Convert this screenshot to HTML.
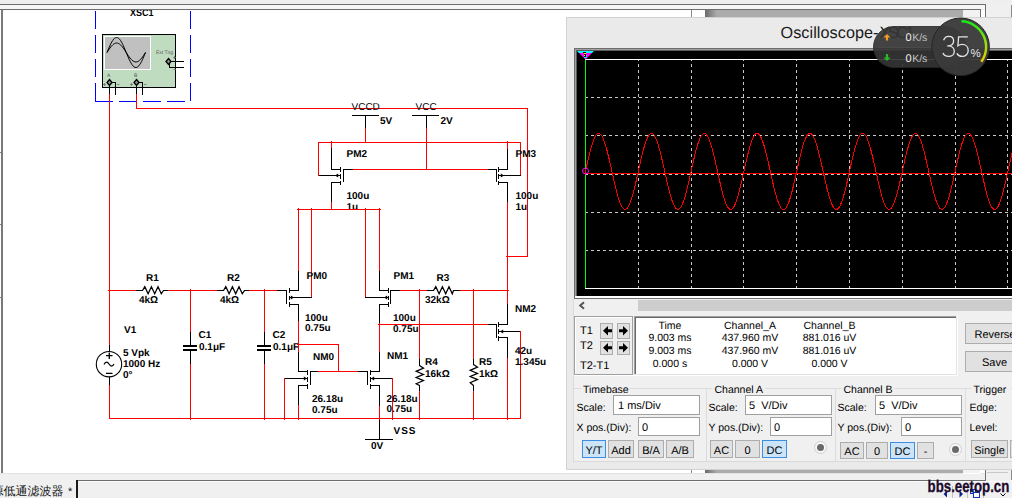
<!DOCTYPE html>
<html><head><meta charset="utf-8"><title>Multisim</title>
<style>
html,body{margin:0;padding:0;width:1012px;height:498px;overflow:hidden;background:#ffffff;}
svg{display:block;}
text{font-family:"Liberation Sans",sans-serif;text-rendering:geometricPrecision;}
</style></head><body>
<svg width="1012" height="498" viewBox="0 0 1012 498" shape-rendering="auto">
<rect x="0" y="0" width="1012" height="10" fill="#efefef" />
<rect x="0" y="4" width="985" height="1" fill="#6e6e6e" />
<rect x="0" y="5" width="985" height="4" fill="#f6f6f6" />
<rect x="0" y="9" width="980" height="1" fill="#6e6e6e" />
<rect x="0" y="10" width="1012" height="463" fill="#ffffff" />
<rect x="1" y="10" width="2" height="463" fill="#7a7a7a" />
<rect x="0" y="152" width="1" height="1" fill="#7a7a7a" />
<rect x="0" y="224" width="1" height="1" fill="#7a7a7a" />
<rect x="0" y="297" width="1" height="1" fill="#7a7a7a" />
<rect x="0" y="473" width="1012" height="1" fill="#e3e3e3" />
<rect x="0" y="474" width="1012" height="24" fill="#f0f0f0" />
<rect x="76" y="480" width="910" height="1" fill="#6e6e6e" />
<rect x="76" y="480" width="2" height="18" fill="#1a1a1a" />
<rect x="78" y="481" width="934" height="1" fill="#fafafa" />
<text x="-8.5" y="495" font-size="12" fill="#101010">源低通滤波器</text><text x="68" y="495" font-size="11" fill="#101010">*</text>
<rect x="691" y="10" width="1" height="7" fill="#8a8a8a" />
<defs><linearGradient id="sg" x1="0" x2="1"><stop offset="0" stop-color="#6a6a6a"/><stop offset="1" stop-color="#ababab"/></linearGradient></defs>
<rect x="705" y="10" width="12" height="7" fill="url(#sg)" />
<rect x="717" y="10" width="246" height="7" fill="#ababab" />
<rect x="963" y="10" width="17" height="7" fill="#f2f2f2" />
<rect x="980" y="9" width="1" height="8" fill="#6e6e6e" />
<rect x="985" y="4" width="1" height="13" fill="#6e6e6e" />
<rect x="986" y="5" width="25" height="12" fill="#f0f0f0" />
<rect x="1011" y="5" width="1" height="12" fill="#8a8a8a" />
<path d="M95.5 11V102M95 101.5H191M190.5 11V102" fill="none" stroke="#0000ff" stroke-width="1" stroke-dasharray="18 6"/>
<text x="130" y="16" font-size="10" font-weight="bold" fill="#000" textLength="23.5" lengthAdjust="spacingAndGlyphs">XSC1</text>
<rect x="102" y="34" width="74" height="54" fill="#000" />
<rect x="103" y="35" width="72" height="52" fill="#c0dcc0" />
<rect x="104" y="36" width="47" height="34" fill="#ffffff" />
<rect x="105" y="37" width="45" height="32" fill="#c0c0c0" />
<polyline fill="none" stroke="#000" stroke-width="1" points="107.0,52.5 108.0,50.2 108.9,47.9 109.9,45.7 110.8,43.7 111.8,41.9 112.8,40.4 113.7,39.1 114.7,38.2 115.7,37.7 116.6,37.5 117.6,37.7 118.5,38.2 119.5,39.1 120.5,40.4 121.4,41.9 122.4,43.7 123.4,45.7 124.3,47.9 125.3,50.2 126.2,52.5 127.2,54.8 128.2,57.1 129.1,59.3 130.1,61.3 131.1,63.1 132.0,64.6 133.0,65.9 133.9,66.8 134.9,67.3 135.9,67.5 136.8,67.3 137.8,66.8 138.8,65.9 139.7,64.6 140.7,63.1 141.7,61.3 142.6,59.3 143.6,57.1 144.5,54.8 145.5,52.5"/>
<polyline fill="none" stroke="#000" stroke-width="1" points="107.0,52.5 108.0,51.0 108.9,49.6 109.9,48.2 110.8,46.9 111.8,45.8 112.8,44.8 113.7,44.0 114.7,43.5 115.7,43.1 116.6,43.0 117.6,43.1 118.5,43.5 119.5,44.0 120.5,44.8 121.4,45.8 122.4,46.9 123.4,48.2 124.3,49.6 125.3,51.0 126.2,52.5 127.2,54.0 128.2,55.4 129.1,56.8 130.1,58.1 131.1,59.2 132.0,60.2 133.0,61.0 133.9,61.5 134.9,61.9 135.9,62.0 136.8,61.9 137.8,61.5 138.8,61.0 139.7,60.2 140.7,59.2 141.7,58.1 142.6,56.8 143.6,55.4 144.5,54.0 145.5,52.5"/>
<text x="107" y="77.2" font-size="5" font-weight="normal" fill="#505050" >A</text>
<text x="134" y="77.2" font-size="5" font-weight="normal" fill="#505050" >B</text>
<path d="M103 84.5h3M104.5 83v3M117 84.5h2.5M130 84.5h3M131.5 83v3M144 84.5h2.5M173 57.5h3M174.5 56v3M173.5 69.5h2.5" stroke="#707070" stroke-width="0.8"/>
<text x="156" y="54" font-size="5" font-weight="normal" fill="#606060" >Ext Trig</text>
<path d="M109.5 79.5L112 82.5L109.5 85.5L107 82.5Z" fill="#909090" stroke="#000" stroke-width="1.3"/>
<path d="M136.5 79.5L139 82.5L136.5 85.5L134 82.5Z" fill="#909090" stroke="#000" stroke-width="1.3"/>
<path d="M168.5 58.5L171 61.5L168.5 64.5L166 61.5Z" fill="#909090" stroke="#000" stroke-width="1.3"/>
<rect x="109" y="85" width="1" height="9" fill="#000000" />
<rect x="112" y="82" width="4" height="1" fill="#000000" />
<rect x="115" y="82" width="1" height="13" fill="#000000" />
<rect x="136" y="85" width="1" height="9" fill="#000000" />
<rect x="139" y="82" width="4" height="1" fill="#000000" />
<rect x="142" y="82" width="1" height="13" fill="#000000" />
<rect x="171" y="61" width="13" height="1" fill="#000000" />
<rect x="169" y="63" width="1" height="5" fill="#000000" />
<rect x="169" y="67" width="15" height="1" fill="#000000" />
<rect x="109" y="94" width="1" height="251" fill="#ff0000" />
<rect x="109" y="345" width="1" height="7" fill="#000000" />
<rect x="136" y="94" width="1" height="15" fill="#ff0000" />
<rect x="136" y="108" width="392" height="1" fill="#ff0000" />
<rect x="527" y="108" width="1" height="149" fill="#ff0000" />
<rect x="507" y="256" width="21" height="1" fill="#ff0000" />
<text x="351.5" y="109.5" font-size="10" font-weight="normal" fill="#000" >VCCD</text>
<text x="415.5" y="109.5" font-size="10" font-weight="normal" fill="#000" >VCC</text>
<rect x="352" y="115" width="27" height="1" fill="#000000" />
<rect x="365" y="115" width="1" height="13" fill="#000000" />
<rect x="365" y="128" width="1" height="15" fill="#ff0000" />
<rect x="412" y="115" width="27" height="1" fill="#000000" />
<rect x="426" y="115" width="1" height="13" fill="#000000" />
<rect x="426" y="128" width="1" height="42" fill="#ff0000" />
<text x="380" y="124" font-size="10" font-weight="bold" fill="#000" >5V</text>
<text x="440.5" y="124" font-size="10" font-weight="bold" fill="#000" >2V</text>
<rect x="318" y="142" width="203" height="1" fill="#ff0000" />
<rect x="318" y="142" width="1" height="34" fill="#ff0000" />
<rect x="319" y="175" width="22" height="1" fill="#000000" />
<path d="M335 175.5L338.2 173.4V177.6Z" fill="#000"/>
<rect x="331" y="142" width="1" height="6" fill="#ff0000" />
<rect x="331" y="148" width="1" height="22" fill="#000000" />
<rect x="340" y="167" width="1" height="5" fill="#000000" />
<rect x="340" y="174" width="1" height="5" fill="#000000" />
<rect x="340" y="181" width="1" height="4" fill="#000000" />
<rect x="343" y="169" width="1" height="13" fill="#000000" />
<rect x="331" y="169" width="10" height="1" fill="#000000" />
<rect x="331" y="182" width="10" height="1" fill="#000000" />
<rect x="343" y="169" width="10" height="1" fill="#000000" />
<rect x="353" y="169" width="135" height="1" fill="#ff0000" />
<rect x="488" y="169" width="9" height="1" fill="#000000" />
<rect x="331" y="182" width="1" height="20" fill="#000000" />
<rect x="331" y="202" width="1" height="8" fill="#ff0000" />
<text x="346.5" y="157" font-size="10" font-weight="bold" fill="#000" >PM2</text>
<text x="346.5" y="199" font-size="10" font-weight="bold" fill="#000" >100u</text>
<text x="346.5" y="210" font-size="10" font-weight="bold" fill="#000" >1u</text>
<rect x="520" y="142" width="1" height="34" fill="#ff0000" />
<rect x="498" y="175" width="23" height="1" fill="#000000" />
<path d="M504 175.5L500.8 173.4V177.6Z" fill="#000"/>
<rect x="507" y="142" width="1" height="7" fill="#ff0000" />
<rect x="507" y="149" width="1" height="21" fill="#000000" />
<rect x="498" y="167" width="1" height="5" fill="#000000" />
<rect x="498" y="174" width="1" height="5" fill="#000000" />
<rect x="498" y="181" width="1" height="4" fill="#000000" />
<rect x="496" y="169" width="1" height="13" fill="#000000" />
<rect x="498" y="169" width="10" height="1" fill="#000000" />
<rect x="498" y="182" width="10" height="1" fill="#000000" />
<rect x="507" y="182" width="1" height="20" fill="#000000" />
<rect x="507" y="202" width="1" height="102" fill="#ff0000" />
<rect x="507" y="304" width="1" height="21" fill="#000000" />
<text x="515.5" y="157" font-size="10" font-weight="bold" fill="#000" >PM3</text>
<text x="515.5" y="199" font-size="10" font-weight="bold" fill="#000" >100u</text>
<text x="515.5" y="210" font-size="10" font-weight="bold" fill="#000" >1u</text>
<rect x="298" y="209" width="82" height="1" fill="#ff0000" />
<rect x="298" y="209" width="1" height="62" fill="#ff0000" />
<rect x="298" y="271" width="1" height="20" fill="#000000" />
<rect x="311" y="209" width="1" height="89" fill="#ff0000" />
<rect x="289" y="297" width="23" height="1" fill="#000000" />
<path d="M294 297.5L290.8 295.4V299.6Z" fill="#000"/>
<rect x="289" y="288" width="1" height="5" fill="#000000" />
<rect x="289" y="296" width="1" height="4" fill="#000000" />
<rect x="289" y="302" width="1" height="5" fill="#000000" />
<rect x="286" y="290" width="1" height="14" fill="#000000" />
<rect x="289" y="290" width="10" height="1" fill="#000000" />
<rect x="289" y="304" width="10" height="1" fill="#000000" />
<rect x="264" y="290" width="13" height="1" fill="#ff0000" />
<rect x="277" y="290" width="10" height="1" fill="#000000" />
<rect x="298" y="304" width="1" height="17" fill="#000000" />
<rect x="298" y="321" width="1" height="24" fill="#ff0000" />
<text x="306.5" y="278.5" font-size="10" font-weight="bold" fill="#000" >PM0</text>
<text x="305" y="320.5" font-size="10" font-weight="bold" fill="#000" >100u</text>
<text x="305" y="331" font-size="10" font-weight="bold" fill="#000" >0.75u</text>
<rect x="379" y="209" width="1" height="62" fill="#ff0000" />
<rect x="379" y="271" width="1" height="20" fill="#000000" />
<rect x="365" y="209" width="1" height="89" fill="#ff0000" />
<rect x="365" y="297" width="24" height="1" fill="#000000" />
<path d="M384 297.5L387.2 295.4V299.6Z" fill="#000"/>
<rect x="388" y="288" width="1" height="5" fill="#000000" />
<rect x="388" y="296" width="1" height="4" fill="#000000" />
<rect x="388" y="302" width="1" height="5" fill="#000000" />
<rect x="390" y="290" width="1" height="14" fill="#000000" />
<rect x="379" y="290" width="10" height="1" fill="#000000" />
<rect x="379" y="304" width="10" height="1" fill="#000000" />
<rect x="390" y="290" width="10" height="1" fill="#000000" />
<rect x="400" y="290" width="28" height="1" fill="#ff0000" />
<rect x="427" y="290" width="7" height="1" fill="#000000" />
<polyline fill="none" stroke="#000" stroke-width="1.25" points="433.5,290.5 435.8,286.7 439.1,293.8 442.4,286.7 445.7,293.8 449.0,286.7 452.3,293.8 453.5,290.5"/>
<rect x="453" y="290" width="8" height="1" fill="#000000" />
<rect x="460" y="290" width="48" height="1" fill="#ff0000" />
<rect x="379" y="304" width="1" height="20" fill="#000000" />
<rect x="379" y="324" width="1" height="28" fill="#ff0000" />
<rect x="379" y="352" width="1" height="20" fill="#000000" />
<rect x="379" y="324" width="109" height="1" fill="#ff0000" />
<rect x="488" y="324" width="9" height="1" fill="#000000" />
<text x="393.5" y="278.5" font-size="10" font-weight="bold" fill="#000" >PM1</text>
<text x="393" y="320.5" font-size="10" font-weight="bold" fill="#000" >100u</text>
<text x="393" y="331.5" font-size="10" font-weight="bold" fill="#000" >0.75u</text>
<text x="436.5" y="281" font-size="10" font-weight="bold" fill="#000" >R3</text>
<text x="425" y="303" font-size="10" font-weight="bold" fill="#000" >32kΩ</text>
<rect x="419" y="290" width="1" height="69" fill="#ff0000" />
<rect x="419" y="359" width="1" height="7" fill="#000000" />
<polyline fill="none" stroke="#000" stroke-width="1.25" points="419.5,365.5 423.5,368.2 416.2,371.3 423.5,374.4 416.2,377.5 423.5,380.6 416.2,383.7 419.5,385.5"/>
<rect x="419" y="385" width="1" height="7" fill="#000000" />
<rect x="419" y="391" width="1" height="28" fill="#ff0000" />
<text x="425" y="364.5" font-size="10" font-weight="bold" fill="#000" >R4</text>
<text x="425" y="376.5" font-size="10" font-weight="bold" fill="#000" >16kΩ</text>
<rect x="473" y="290" width="1" height="69" fill="#ff0000" />
<rect x="473" y="359" width="1" height="6" fill="#000000" />
<polyline fill="none" stroke="#000" stroke-width="1.25" points="473.5,364.5 477.5,367.2 470.2,370.3 477.5,373.4 470.2,376.5 477.5,379.6 470.2,382.7 473.5,385.5"/>
<rect x="473" y="385" width="1" height="7" fill="#000000" />
<rect x="473" y="391" width="1" height="28" fill="#ff0000" />
<text x="479" y="364.5" font-size="10" font-weight="bold" fill="#000" >R5</text>
<text x="479" y="376.5" font-size="10" font-weight="bold" fill="#000" >1kΩ</text>
<rect x="498" y="322" width="1" height="5" fill="#000000" />
<rect x="498" y="329" width="1" height="5" fill="#000000" />
<rect x="498" y="336" width="1" height="5" fill="#000000" />
<rect x="496" y="324" width="1" height="14" fill="#000000" />
<rect x="498" y="324" width="10" height="1" fill="#000000" />
<rect x="498" y="337" width="10" height="1" fill="#000000" />
<rect x="498" y="331" width="23" height="1" fill="#000000" />
<path d="M500 331.5L503.2 329.4V333.6Z" fill="#000"/>
<rect x="520" y="331" width="1" height="88" fill="#ff0000" />
<rect x="507" y="337" width="1" height="21" fill="#000000" />
<rect x="507" y="358" width="1" height="61" fill="#ff0000" />
<text x="515" y="312" font-size="10" font-weight="bold" fill="#000" >NM2</text>
<text x="515" y="353.5" font-size="10" font-weight="bold" fill="#000" >42u</text>
<text x="515" y="365" font-size="10" font-weight="bold" fill="#000" >1.345u</text>
<rect x="109" y="290" width="28" height="1" fill="#ff0000" />
<rect x="136" y="290" width="7" height="1" fill="#000000" />
<polyline fill="none" stroke="#000" stroke-width="1.25" points="142.5,290.5 144.8,286.7 148.1,293.8 151.4,286.7 154.7,293.8 158.0,286.7 161.3,293.8 163.5,290.5"/>
<rect x="163" y="290" width="6" height="1" fill="#000000" />
<rect x="168" y="290" width="50" height="1" fill="#ff0000" />
<rect x="217" y="290" width="7" height="1" fill="#000000" />
<polyline fill="none" stroke="#000" stroke-width="1.25" points="223.5,290.5 225.8,286.7 229.1,293.8 232.4,286.7 235.7,293.8 239.0,286.7 242.3,293.8 244.5,290.5"/>
<rect x="244" y="290" width="6" height="1" fill="#000000" />
<rect x="249" y="290" width="16" height="1" fill="#ff0000" />
<text x="146" y="281" font-size="10" font-weight="bold" fill="#000" >R1</text>
<text x="139" y="303" font-size="10" font-weight="bold" fill="#000" >4kΩ</text>
<text x="227" y="281" font-size="10" font-weight="bold" fill="#000" >R2</text>
<text x="220" y="303" font-size="10" font-weight="bold" fill="#000" >4kΩ</text>
<rect x="190" y="290" width="1" height="42" fill="#ff0000" />
<rect x="190" y="332" width="1" height="14" fill="#000000" />
<rect x="183" y="345" width="14" height="2" fill="#000000" />
<rect x="183" y="349" width="14" height="2" fill="#000000" />
<rect x="190" y="350" width="1" height="14" fill="#000000" />
<rect x="190" y="364" width="1" height="55" fill="#ff0000" />
<text x="198.5" y="338" font-size="10" font-weight="bold" fill="#000" >C1</text>
<text x="199" y="350" font-size="10" font-weight="bold" fill="#000" >0.1μF</text>
<rect x="264" y="290" width="1" height="42" fill="#ff0000" />
<rect x="264" y="332" width="1" height="14" fill="#000000" />
<rect x="257" y="345" width="14" height="2" fill="#000000" />
<rect x="257" y="349" width="14" height="2" fill="#000000" />
<rect x="264" y="350" width="1" height="14" fill="#000000" />
<rect x="264" y="364" width="1" height="55" fill="#ff0000" />
<text x="272.5" y="338" font-size="10" font-weight="bold" fill="#000" >C2</text>
<text x="273" y="350" font-size="10" font-weight="bold" fill="#000" >0.1μF</text>
<text x="124" y="332.5" font-size="10" font-weight="bold" fill="#000" >V1</text>
<circle cx="109" cy="364.2" r="12.7" fill="none" stroke="#000" stroke-width="1.1"/>
<path d="M106 355.7h6.5M109.3 352.5v6.5M106 373.3h6.5" stroke="#000" stroke-width="1.3"/>
<path d="M104 364.5C105.5 361.5 107.5 361.5 109 364S112.5 367 114 364" fill="none" stroke="#000" stroke-width="1.2"/>
<rect x="109" y="377" width="1" height="8" fill="#000000" />
<rect x="109" y="385" width="1" height="34" fill="#ff0000" />
<text x="123" y="356" font-size="10" font-weight="bold" fill="#000" >5 Vpk</text>
<text x="123" y="367" font-size="10" font-weight="bold" fill="#000" >1000 Hz</text>
<text x="123" y="378" font-size="10" font-weight="bold" fill="#000" >0°</text>
<rect x="109" y="418" width="412" height="1" fill="#ff0000" />
<rect x="298" y="344" width="41" height="1" fill="#ff0000" />
<rect x="338" y="344" width="1" height="27" fill="#ff0000" />
<rect x="298" y="345" width="1" height="7" fill="#ff0000" />
<rect x="298" y="352" width="1" height="20" fill="#000000" />
<rect x="307" y="370" width="1" height="5" fill="#000000" />
<rect x="307" y="377" width="1" height="5" fill="#000000" />
<rect x="307" y="384" width="1" height="5" fill="#000000" />
<rect x="310" y="371" width="1" height="14" fill="#000000" />
<rect x="298" y="371" width="10" height="1" fill="#000000" />
<rect x="298" y="385" width="10" height="1" fill="#000000" />
<rect x="284" y="378" width="24" height="1" fill="#000000" />
<path d="M307 378.5L303.8 376.4V380.6Z" fill="#000"/>
<rect x="284" y="378" width="1" height="41" fill="#ff0000" />
<rect x="310" y="371" width="8" height="1" fill="#000000" />
<rect x="318" y="371" width="40" height="1" fill="#ff0000" />
<rect x="358" y="371" width="10" height="1" fill="#000000" />
<rect x="298" y="385" width="1" height="20" fill="#000000" />
<rect x="298" y="405" width="1" height="14" fill="#ff0000" />
<text x="313" y="359.5" font-size="10" font-weight="bold" fill="#000" >NM0</text>
<text x="312" y="401.5" font-size="10" font-weight="bold" fill="#000" >26.18u</text>
<text x="312" y="412.5" font-size="10" font-weight="bold" fill="#000" >0.75u</text>
<rect x="370" y="370" width="1" height="5" fill="#000000" />
<rect x="370" y="377" width="1" height="5" fill="#000000" />
<rect x="370" y="384" width="1" height="5" fill="#000000" />
<rect x="367" y="371" width="1" height="14" fill="#000000" />
<rect x="370" y="371" width="10" height="1" fill="#000000" />
<rect x="370" y="385" width="10" height="1" fill="#000000" />
<rect x="370" y="378" width="23" height="1" fill="#000000" />
<path d="M371 378.5L374.2 376.4V380.6Z" fill="#000"/>
<rect x="392" y="378" width="1" height="41" fill="#ff0000" />
<rect x="379" y="385" width="1" height="21" fill="#000000" />
<rect x="379" y="406" width="1" height="13" fill="#ff0000" />
<text x="387" y="359" font-size="10" font-weight="bold" fill="#000" >NM1</text>
<text x="386.5" y="401.5" font-size="10" font-weight="bold" fill="#000" >26.18u</text>
<text x="386.5" y="412" font-size="10" font-weight="bold" fill="#000" >0.75u</text>
<rect x="379" y="419" width="1" height="21" fill="#000000" />
<rect x="365" y="439" width="28" height="1" fill="#000000" />
<text x="393.5" y="434" font-size="10" font-weight="bold" fill="#000" letter-spacing="1">VSS</text>
<text x="371" y="449" font-size="10" font-weight="bold" fill="#000" >0V</text>
<path d="M364 143h3v-1h-1v-1h-1v1h-1z" fill="#ff0000"/>
<path d="M330 143h3v-1h-1v-1h-1v1h-1z" fill="#ff0000"/>
<path d="M506 143h3v-1h-1v-1h-1v1h-1z" fill="#ff0000"/>
<path d="M425 170h3v-1h-1v-1h-1v1h-1z" fill="#ff0000"/>
<path d="M330 210h3v-1h-1v-1h-1v1h-1z" fill="#ff0000"/>
<path d="M297 210h3v-1h-1v-1h-1v1h-1z" fill="#ff0000"/>
<path d="M310 210h3v-1h-1v-1h-1v1h-1z" fill="#ff0000"/>
<path d="M364 210h3v-1h-1v-1h-1v1h-1z" fill="#ff0000"/>
<path d="M378 210h3v-1h-1v-1h-1v1h-1z" fill="#ff0000"/>
<path d="M108 291h3v-1h-1v-1h-1v1h-1z" fill="#ff0000"/>
<path d="M189 291h3v-1h-1v-1h-1v1h-1z" fill="#ff0000"/>
<path d="M263 291h3v-1h-1v-1h-1v1h-1z" fill="#ff0000"/>
<path d="M418 291h3v-1h-1v-1h-1v1h-1z" fill="#ff0000"/>
<path d="M472 291h3v-1h-1v-1h-1v1h-1z" fill="#ff0000"/>
<path d="M506 291h3v-1h-1v-1h-1v1h-1z" fill="#ff0000"/>
<path d="M506 257h3v-1h-1v-1h-1v1h-1z" fill="#ff0000"/>
<path d="M378 325h3v-1h-1v-1h-1v1h-1z" fill="#ff0000"/>
<path d="M297 345h3v-1h-1v-1h-1v1h-1z" fill="#ff0000"/>
<path d="M337 372h3v-1h-1v-1h-1v1h-1z" fill="#ff0000"/>
<path d="M189 418h3v1h-1v1h-1v-1h-1z" fill="#ff0000"/>
<path d="M263 418h3v1h-1v1h-1v-1h-1z" fill="#ff0000"/>
<path d="M283 418h3v1h-1v1h-1v-1h-1z" fill="#ff0000"/>
<path d="M297 418h3v1h-1v1h-1v-1h-1z" fill="#ff0000"/>
<path d="M378 418h3v1h-1v1h-1v-1h-1z" fill="#ff0000"/>
<path d="M391 418h3v1h-1v1h-1v-1h-1z" fill="#ff0000"/>
<path d="M418 418h3v1h-1v1h-1v-1h-1z" fill="#ff0000"/>
<path d="M472 418h3v1h-1v1h-1v-1h-1z" fill="#ff0000"/>
<path d="M506 418h3v1h-1v1h-1v-1h-1z" fill="#ff0000"/>
<rect x="0" y="0" width="566" height="4" fill="#efefef" />
<rect x="0" y="4" width="566" height="1" fill="#6e6e6e" />
<rect x="0" y="5" width="566" height="4" fill="#f6f6f6" />
<rect x="0" y="9" width="566" height="1" fill="#6e6e6e" />
<rect x="566" y="17" width="446" height="453" fill="#d2d2d2" />
<rect x="567" y="18" width="445" height="451" fill="#eaeaea" />
<text x="780.5" y="38" font-size="16.2" fill="#1a1a1a" textLength="98" lengthAdjust="spacing">Oscilloscope-</text><text x="879.5" y="38" font-size="16.2" fill="#1a1a1a" textLength="35" lengthAdjust="spacing">XSC1</text>
<rect x="574" y="48" width="438" height="251" fill="#6e6e6e" />
<rect x="575" y="49" width="437" height="249" fill="#a0a0a0" />
<rect x="576" y="50" width="436" height="247" fill="#5a5a5a" />
<rect x="577" y="51" width="435" height="245" fill="#000000" />
<rect x="575" y="296" width="437" height="2" fill="#ffffff" />
<line x1="585" y1="97.5" x2="1012" y2="97.5" stroke="#c8c8c8" stroke-width="1" stroke-dasharray="3 3"/>
<line x1="585" y1="135.5" x2="1012" y2="135.5" stroke="#c8c8c8" stroke-width="1" stroke-dasharray="3 3"/>
<line x1="585" y1="174.5" x2="1012" y2="174.5" stroke="#c8c8c8" stroke-width="1" stroke-dasharray="3 3"/>
<line x1="585" y1="212.5" x2="1012" y2="212.5" stroke="#c8c8c8" stroke-width="1" stroke-dasharray="3 3"/>
<line x1="585" y1="250.5" x2="1012" y2="250.5" stroke="#c8c8c8" stroke-width="1" stroke-dasharray="3 3"/>
<line x1="638.5" y1="64" x2="638.5" y2="288" stroke="#c8c8c8" stroke-width="1" stroke-dasharray="3 3"/>
<rect x="638" y="60" width="1" height="1" fill="#c8c8c8" />
<line x1="691.5" y1="64" x2="691.5" y2="288" stroke="#c8c8c8" stroke-width="1" stroke-dasharray="3 3"/>
<rect x="691" y="60" width="1" height="1" fill="#c8c8c8" />
<line x1="743.5" y1="64" x2="743.5" y2="288" stroke="#c8c8c8" stroke-width="1" stroke-dasharray="3 3"/>
<rect x="743" y="60" width="1" height="1" fill="#c8c8c8" />
<line x1="796.5" y1="64" x2="796.5" y2="288" stroke="#c8c8c8" stroke-width="1" stroke-dasharray="3 3"/>
<rect x="796" y="60" width="1" height="1" fill="#c8c8c8" />
<line x1="849.5" y1="64" x2="849.5" y2="288" stroke="#c8c8c8" stroke-width="1" stroke-dasharray="3 3"/>
<rect x="849" y="60" width="1" height="1" fill="#c8c8c8" />
<line x1="902.5" y1="64" x2="902.5" y2="288" stroke="#c8c8c8" stroke-width="1" stroke-dasharray="3 3"/>
<rect x="902" y="60" width="1" height="1" fill="#c8c8c8" />
<line x1="955.5" y1="64" x2="955.5" y2="288" stroke="#c8c8c8" stroke-width="1" stroke-dasharray="3 3"/>
<rect x="955" y="60" width="1" height="1" fill="#c8c8c8" />
<line x1="1007.5" y1="64" x2="1007.5" y2="288" stroke="#c8c8c8" stroke-width="1" stroke-dasharray="3 3"/>
<rect x="1007" y="60" width="1" height="1" fill="#c8c8c8" />
<rect x="585" y="59" width="1" height="230" fill="#00ff00" />
<rect x="585" y="59" width="427" height="1" fill="#ffffff" />
<rect x="585" y="288" width="427" height="1" fill="#ffffff" />
<rect x="586" y="173" width="426" height="1" fill="#ff0000" />
<polyline fill="none" stroke="#ff0000" stroke-width="1" shape-rendering="crispEdges" points="585.00,173.66 585.50,171.40 586.00,169.14 586.50,166.89 587.00,164.65 587.50,162.44 588.00,160.26 588.50,158.12 589.00,156.03 589.50,153.99 590.00,152.01 590.50,150.10 591.00,148.27 591.50,146.52 592.00,144.85 592.50,143.28 593.00,141.81 593.50,140.45 594.00,139.19 594.50,138.05 595.00,137.02 595.50,136.12 596.00,135.34 596.50,134.69 597.00,134.17 597.50,133.79 598.00,133.53 598.50,133.41 599.00,133.42 599.50,133.57 600.00,133.85 600.50,134.27 601.00,134.81 601.50,135.49 602.00,136.29 602.50,137.22 603.00,138.27 603.50,139.43 604.00,140.71 604.50,142.10 605.00,143.59 605.50,145.18 606.00,146.86 606.50,148.63 607.00,150.48 607.50,152.40 608.00,154.39 608.50,156.44 609.00,158.54 609.50,160.69 610.00,162.88 610.50,165.10 611.00,167.34 611.50,169.59 612.00,171.85 612.50,174.11 613.00,176.36 613.50,178.59 614.00,180.80 614.50,182.97 615.00,185.10 615.50,187.19 616.00,189.21 616.50,191.18 617.00,193.07 617.50,194.89 618.00,196.62 618.50,198.27 619.00,199.82 619.50,201.27 620.00,202.61 620.50,203.85 621.00,204.97 621.50,205.97 622.00,206.84 622.50,207.60 623.00,208.22 623.50,208.71 624.00,209.07 624.50,209.30 625.00,209.40 625.50,209.36 626.00,209.18 626.50,208.87 627.00,208.43 627.50,207.86 628.00,207.16 628.50,206.33 629.00,205.38 629.50,204.31 630.00,203.12 630.50,201.82 631.00,200.41 631.50,198.90 632.00,197.29 632.50,195.59 633.00,193.81 633.50,191.94 634.00,190.01 634.50,188.00 635.00,185.94 635.50,183.83 636.00,181.67 636.50,179.48 637.00,177.26 637.50,175.01 638.00,172.76 638.50,170.50 639.00,168.24 639.50,165.99 640.00,163.76 640.50,161.56 641.00,159.40 641.50,157.28 642.00,155.20 642.50,153.19 643.00,151.24 643.50,149.36 644.00,147.56 644.50,145.84 645.00,144.21 645.50,142.68 646.00,141.25 646.50,139.93 647.00,138.72 647.50,137.62 648.00,136.65 648.50,135.80 649.00,135.07 649.50,134.47 650.00,134.00 650.50,133.67 651.00,133.47 651.50,133.40 652.00,133.47 652.50,133.67 653.00,134.00 653.50,134.47 654.00,135.07 654.50,135.80 655.00,136.65 655.50,137.62 656.00,138.72 656.50,139.93 657.00,141.25 657.50,142.68 658.00,144.21 658.50,145.84 659.00,147.56 659.50,149.36 660.00,151.24 660.50,153.19 661.00,155.20 661.50,157.28 662.00,159.40 662.50,161.56 663.00,163.76 663.50,165.99 664.00,168.24 664.50,170.50 665.00,172.76 665.50,175.01 666.00,177.26 666.50,179.48 667.00,181.67 667.50,183.83 668.00,185.94 668.50,188.00 669.00,190.01 669.50,191.94 670.00,193.81 670.50,195.59 671.00,197.29 671.50,198.90 672.00,200.41 672.50,201.82 673.00,203.12 673.50,204.31 674.00,205.38 674.50,206.33 675.00,207.16 675.50,207.86 676.00,208.43 676.50,208.87 677.00,209.18 677.50,209.36 678.00,209.40 678.50,209.30 679.00,209.07 679.50,208.71 680.00,208.22 680.50,207.60 681.00,206.84 681.50,205.97 682.00,204.97 682.50,203.85 683.00,202.61 683.50,201.27 684.00,199.82 684.50,198.27 685.00,196.62 685.50,194.89 686.00,193.07 686.50,191.18 687.00,189.21 687.50,187.19 688.00,185.10 688.50,182.97 689.00,180.80 689.50,178.59 690.00,176.36 690.50,174.11 691.00,171.85 691.50,169.59 692.00,167.34 692.50,165.10 693.00,162.88 693.50,160.69 694.00,158.54 694.50,156.44 695.00,154.39 695.50,152.40 696.00,150.48 696.50,148.63 697.00,146.86 697.50,145.18 698.00,143.59 698.50,142.10 699.00,140.71 699.50,139.43 700.00,138.27 700.50,137.22 701.00,136.29 701.50,135.49 702.00,134.81 702.50,134.27 703.00,133.85 703.50,133.57 704.00,133.42 704.50,133.41 705.00,133.53 705.50,133.79 706.00,134.17 706.50,134.69 707.00,135.34 707.50,136.12 708.00,137.02 708.50,138.05 709.00,139.19 709.50,140.45 710.00,141.81 710.50,143.28 711.00,144.85 711.50,146.52 712.00,148.27 712.50,150.10 713.00,152.01 713.50,153.99 714.00,156.03 714.50,158.12 715.00,160.26 715.50,162.44 716.00,164.65 716.50,166.89 717.00,169.14 717.50,171.40 718.00,173.66 718.50,175.91 719.00,178.15 719.50,180.36 720.00,182.54 720.50,184.68 721.00,186.77 721.50,188.81 722.00,190.79 722.50,192.70 723.00,194.53 723.50,196.28 724.00,197.95 724.50,199.52 725.00,200.99 725.50,202.35 726.00,203.61 726.50,204.75 727.00,205.78 727.50,206.68 728.00,207.46 728.50,208.11 729.00,208.63 729.50,209.01 730.00,209.27 730.50,209.39 731.00,209.38 731.50,209.23 732.00,208.95 732.50,208.53 733.00,207.99 733.50,207.31 734.00,206.51 734.50,205.58 735.00,204.53 735.50,203.37 736.00,202.09 736.50,200.70 737.00,199.21 737.50,197.62 738.00,195.94 738.50,194.17 739.00,192.32 739.50,190.40 740.00,188.41 740.50,186.36 741.00,184.26 741.50,182.11 742.00,179.92 742.50,177.70 743.00,175.46 743.50,173.21 744.00,170.95 744.50,168.69 745.00,166.44 745.50,164.21 746.00,162.00 746.50,159.83 747.00,157.70 747.50,155.61 748.00,153.59 748.50,151.62 749.00,149.73 749.50,147.91 750.00,146.18 750.50,144.53 751.00,142.98 751.50,141.53 752.00,140.19 752.50,138.95 753.00,137.83 753.50,136.83 754.00,135.96 754.50,135.20 755.00,134.58 755.50,134.09 756.00,133.73 756.50,133.50 757.00,133.40 757.50,133.44 758.00,133.62 758.50,133.93 759.00,134.37 759.50,134.94 760.00,135.64 760.50,136.47 761.00,137.42 761.50,138.49 762.00,139.68 762.50,140.98 763.00,142.39 763.50,143.90 764.00,145.51 764.50,147.21 765.00,148.99 765.50,150.86 766.00,152.79 766.50,154.80 767.00,156.86 767.50,158.97 768.00,161.13 768.50,163.32 769.00,165.54 769.50,167.79 770.00,170.04 770.50,172.30 771.00,174.56 771.50,176.81 772.00,179.04 772.50,181.24 773.00,183.40 773.50,185.52 774.00,187.60 774.50,189.61 775.00,191.56 775.50,193.44 776.00,195.24 776.50,196.96 777.00,198.59 777.50,200.12 778.00,201.55 778.50,202.87 779.00,204.08 779.50,205.18 780.00,206.15 780.50,207.00 781.00,207.73 781.50,208.33 782.00,208.80 782.50,209.13 783.00,209.33 783.50,209.40 784.00,209.33 784.50,209.13 785.00,208.80 785.50,208.33 786.00,207.73 786.50,207.00 787.00,206.15 787.50,205.18 788.00,204.08 788.50,202.87 789.00,201.55 789.50,200.12 790.00,198.59 790.50,196.96 791.00,195.24 791.50,193.44 792.00,191.56 792.50,189.61 793.00,187.60 793.50,185.52 794.00,183.40 794.50,181.24 795.00,179.04 795.50,176.81 796.00,174.56 796.50,172.30 797.00,170.04 797.50,167.79 798.00,165.54 798.50,163.32 799.00,161.13 799.50,158.97 800.00,156.86 800.50,154.80 801.00,152.79 801.50,150.86 802.00,148.99 802.50,147.21 803.00,145.51 803.50,143.90 804.00,142.39 804.50,140.98 805.00,139.68 805.50,138.49 806.00,137.42 806.50,136.47 807.00,135.64 807.50,134.94 808.00,134.37 808.50,133.93 809.00,133.62 809.50,133.44 810.00,133.40 810.50,133.50 811.00,133.73 811.50,134.09 812.00,134.58 812.50,135.20 813.00,135.96 813.50,136.83 814.00,137.83 814.50,138.95 815.00,140.19 815.50,141.53 816.00,142.98 816.50,144.53 817.00,146.18 817.50,147.91 818.00,149.73 818.50,151.62 819.00,153.59 819.50,155.61 820.00,157.70 820.50,159.83 821.00,162.00 821.50,164.21 822.00,166.44 822.50,168.69 823.00,170.95 823.50,173.21 824.00,175.46 824.50,177.70 825.00,179.92 825.50,182.11 826.00,184.26 826.50,186.36 827.00,188.41 827.50,190.40 828.00,192.32 828.50,194.17 829.00,195.94 829.50,197.62 830.00,199.21 830.50,200.70 831.00,202.09 831.50,203.37 832.00,204.53 832.50,205.58 833.00,206.51 833.50,207.31 834.00,207.99 834.50,208.53 835.00,208.95 835.50,209.23 836.00,209.38 836.50,209.39 837.00,209.27 837.50,209.01 838.00,208.63 838.50,208.11 839.00,207.46 839.50,206.68 840.00,205.78 840.50,204.75 841.00,203.61 841.50,202.35 842.00,200.99 842.50,199.52 843.00,197.95 843.50,196.28 844.00,194.53 844.50,192.70 845.00,190.79 845.50,188.81 846.00,186.77 846.50,184.68 847.00,182.54 847.50,180.36 848.00,178.15 848.50,175.91 849.00,173.66 849.50,171.40 850.00,169.14 850.50,166.89 851.00,164.65 851.50,162.44 852.00,160.26 852.50,158.12 853.00,156.03 853.50,153.99 854.00,152.01 854.50,150.10 855.00,148.27 855.50,146.52 856.00,144.85 856.50,143.28 857.00,141.81 857.50,140.45 858.00,139.19 858.50,138.05 859.00,137.02 859.50,136.12 860.00,135.34 860.50,134.69 861.00,134.17 861.50,133.79 862.00,133.53 862.50,133.41 863.00,133.42 863.50,133.57 864.00,133.85 864.50,134.27 865.00,134.81 865.50,135.49 866.00,136.29 866.50,137.22 867.00,138.27 867.50,139.43 868.00,140.71 868.50,142.10 869.00,143.59 869.50,145.18 870.00,146.86 870.50,148.63 871.00,150.48 871.50,152.40 872.00,154.39 872.50,156.44 873.00,158.54 873.50,160.69 874.00,162.88 874.50,165.10 875.00,167.34 875.50,169.59 876.00,171.85 876.50,174.11 877.00,176.36 877.50,178.59 878.00,180.80 878.50,182.97 879.00,185.10 879.50,187.19 880.00,189.21 880.50,191.18 881.00,193.07 881.50,194.89 882.00,196.62 882.50,198.27 883.00,199.82 883.50,201.27 884.00,202.61 884.50,203.85 885.00,204.97 885.50,205.97 886.00,206.84 886.50,207.60 887.00,208.22 887.50,208.71 888.00,209.07 888.50,209.30 889.00,209.40 889.50,209.36 890.00,209.18 890.50,208.87 891.00,208.43 891.50,207.86 892.00,207.16 892.50,206.33 893.00,205.38 893.50,204.31 894.00,203.12 894.50,201.82 895.00,200.41 895.50,198.90 896.00,197.29 896.50,195.59 897.00,193.81 897.50,191.94 898.00,190.01 898.50,188.00 899.00,185.94 899.50,183.83 900.00,181.67 900.50,179.48 901.00,177.26 901.50,175.01 902.00,172.76 902.50,170.50 903.00,168.24 903.50,165.99 904.00,163.76 904.50,161.56 905.00,159.40 905.50,157.28 906.00,155.20 906.50,153.19 907.00,151.24 907.50,149.36 908.00,147.56 908.50,145.84 909.00,144.21 909.50,142.68 910.00,141.25 910.50,139.93 911.00,138.72 911.50,137.62 912.00,136.65 912.50,135.80 913.00,135.07 913.50,134.47 914.00,134.00 914.50,133.67 915.00,133.47 915.50,133.40 916.00,133.47 916.50,133.67 917.00,134.00 917.50,134.47 918.00,135.07 918.50,135.80 919.00,136.65 919.50,137.62 920.00,138.72 920.50,139.93 921.00,141.25 921.50,142.68 922.00,144.21 922.50,145.84 923.00,147.56 923.50,149.36 924.00,151.24 924.50,153.19 925.00,155.20 925.50,157.28 926.00,159.40 926.50,161.56 927.00,163.76 927.50,165.99 928.00,168.24 928.50,170.50 929.00,172.76 929.50,175.01 930.00,177.26 930.50,179.48 931.00,181.67 931.50,183.83 932.00,185.94 932.50,188.00 933.00,190.01 933.50,191.94 934.00,193.81 934.50,195.59 935.00,197.29 935.50,198.90 936.00,200.41 936.50,201.82 937.00,203.12 937.50,204.31 938.00,205.38 938.50,206.33 939.00,207.16 939.50,207.86 940.00,208.43 940.50,208.87 941.00,209.18 941.50,209.36 942.00,209.40 942.50,209.30 943.00,209.07 943.50,208.71 944.00,208.22 944.50,207.60 945.00,206.84 945.50,205.97 946.00,204.97 946.50,203.85 947.00,202.61 947.50,201.27 948.00,199.82 948.50,198.27 949.00,196.62 949.50,194.89 950.00,193.07 950.50,191.18 951.00,189.21 951.50,187.19 952.00,185.10 952.50,182.97 953.00,180.80 953.50,178.59 954.00,176.36 954.50,174.11 955.00,171.85 955.50,169.59 956.00,167.34 956.50,165.10 957.00,162.88 957.50,160.69 958.00,158.54 958.50,156.44 959.00,154.39 959.50,152.40 960.00,150.48 960.50,148.63 961.00,146.86 961.50,145.18 962.00,143.59 962.50,142.10 963.00,140.71 963.50,139.43 964.00,138.27 964.50,137.22 965.00,136.29 965.50,135.49 966.00,134.81 966.50,134.27 967.00,133.85 967.50,133.57 968.00,133.42 968.50,133.41 969.00,133.53 969.50,133.79 970.00,134.17 970.50,134.69 971.00,135.34 971.50,136.12 972.00,137.02 972.50,138.05 973.00,139.19 973.50,140.45 974.00,141.81 974.50,143.28 975.00,144.85 975.50,146.52 976.00,148.27 976.50,150.10 977.00,152.01 977.50,153.99 978.00,156.03 978.50,158.12 979.00,160.26 979.50,162.44 980.00,164.65 980.50,166.89 981.00,169.14 981.50,171.40 982.00,173.66 982.50,175.91 983.00,178.15 983.50,180.36 984.00,182.54 984.50,184.68 985.00,186.77 985.50,188.81 986.00,190.79 986.50,192.70 987.00,194.53 987.50,196.28 988.00,197.95 988.50,199.52 989.00,200.99 989.50,202.35 990.00,203.61 990.50,204.75 991.00,205.78 991.50,206.68 992.00,207.46 992.50,208.11 993.00,208.63 993.50,209.01 994.00,209.27 994.50,209.39 995.00,209.38 995.50,209.23 996.00,208.95 996.50,208.53 997.00,207.99 997.50,207.31 998.00,206.51 998.50,205.58 999.00,204.53 999.50,203.37 1000.00,202.09 1000.50,200.70 1001.00,199.21 1001.50,197.62 1002.00,195.94 1002.50,194.17 1003.00,192.32 1003.50,190.40 1004.00,188.41 1004.50,186.36 1005.00,184.26 1005.50,182.11 1006.00,179.92 1006.50,177.70 1007.00,175.46 1007.50,173.21 1008.00,170.95 1008.50,168.69 1009.00,166.44 1009.50,164.21 1010.00,162.00 1010.50,159.83 1011.00,157.70 1011.50,155.61 1012.00,153.59 1012.50,151.62 1013.00,149.73"/>
<circle cx="585.5" cy="171" r="3" fill="none" stroke="#ff00ff" stroke-width="1"/>
<path d="M577 51H594L592 53H579Z" fill="#00ffff"/>
<path d="M579 53H592L585.5 59.5Z" fill="#ff00ff"/>
<rect x="583" y="52" width="3" height="1" fill="#000" />
<rect x="584" y="53" width="2" height="1" fill="#ffff00" />
<rect x="584" y="54" width="2" height="3" fill="#000" />
<rect x="584" y="55" width="1" height="1" fill="#ffff00" />
<rect x="586" y="55" width="1" height="1" fill="#00ffff" />
<rect x="584" y="57" width="3" height="1" fill="#00ffff" />
<rect x="573" y="299" width="439" height="163" fill="#dadada" />
<rect x="574" y="299" width="438" height="162" fill="#f0f0f0" />
<path d="M584 302.2L580.2 305.5L584 308.8" fill="none" stroke="#555" stroke-width="2"/>
<rect x="638" y="300" width="374" height="11" fill="#cdcdcd" />
<rect x="574" y="316" width="59" height="59" fill="#a0a0a0" />
<rect x="575" y="317" width="57" height="57" fill="#ffffff" />
<rect x="576" y="318" width="56" height="56" fill="#f0f0f0" />
<rect x="632" y="316" width="1" height="59" fill="#a0a0a0" />
<rect x="574" y="374" width="59" height="1" fill="#a0a0a0" />
<text x="580" y="334" font-size="11" fill="#000" text-anchor="start" >T1</text>
<text x="580" y="348.5" font-size="11" fill="#000" text-anchor="start" >T2</text>
<text x="580" y="368.5" font-size="11" fill="#000" text-anchor="start" >T2-T1</text>
<rect x="600" y="323" width="13" height="16" fill="#adadad" />
<rect x="601" y="324" width="11" height="14" fill="#e1e1e1" />
<path d="M603 330.8L608 326.0V329.3H612V332.3H608V335.6Z" fill="#000"/>
<rect x="617" y="323" width="13" height="16" fill="#adadad" />
<rect x="618" y="324" width="11" height="14" fill="#e1e1e1" />
<path d="M628 330.8L623 326.0V329.3H619V332.3H623V335.6Z" fill="#000"/>
<rect x="600" y="341" width="13" height="14" fill="#adadad" />
<rect x="601" y="342" width="11" height="12" fill="#e1e1e1" />
<path d="M603 347.8L608 343.0V346.3H612V349.3H608V352.6Z" fill="#000"/>
<rect x="617" y="341" width="13" height="14" fill="#adadad" />
<rect x="618" y="342" width="11" height="12" fill="#e1e1e1" />
<path d="M628 347.8L623 343.0V346.3H619V349.3H623V352.6Z" fill="#000"/>
<rect x="634" y="316" width="323" height="59" fill="#e3e3e3" />
<rect x="634" y="316" width="322" height="58" fill="#a0a0a0" />
<rect x="635" y="317" width="321" height="57" fill="#696969" />
<rect x="636" y="318" width="320" height="56" fill="#ffffff" />
<rect x="957" y="316" width="1" height="59" fill="#ffffff" />
<rect x="574" y="375" width="384" height="1" fill="#ffffff" />
<text x="670" y="328.5" font-size="10.5" fill="#000" text-anchor="middle" >Time</text>
<text x="750" y="328.5" font-size="10.5" fill="#000" text-anchor="middle" >Channel_A</text>
<text x="829.5" y="328.5" font-size="10.5" fill="#000" text-anchor="middle" >Channel_B</text>
<text x="670" y="341.4" font-size="10.5" fill="#000" text-anchor="middle" >9.003 ms</text>
<text x="750" y="341.4" font-size="10.5" fill="#000" text-anchor="middle" >437.960 mV</text>
<text x="829.5" y="341.4" font-size="10.5" fill="#000" text-anchor="middle" >881.016 uV</text>
<text x="670" y="354.3" font-size="10.5" fill="#000" text-anchor="middle" >9.003 ms</text>
<text x="750" y="354.3" font-size="10.5" fill="#000" text-anchor="middle" >437.960 mV</text>
<text x="829.5" y="354.3" font-size="10.5" fill="#000" text-anchor="middle" >881.016 uV</text>
<text x="670" y="367.2" font-size="10.5" fill="#000" text-anchor="middle" >0.000 s</text>
<text x="750" y="367.2" font-size="10.5" fill="#000" text-anchor="middle" >0.000 V</text>
<text x="829.5" y="367.2" font-size="10.5" fill="#000" text-anchor="middle" >0.000 V</text>
<rect x="965" y="323" width="60" height="21" fill="#adadad" />
<rect x="966" y="324" width="58" height="19" fill="#e1e1e1" />
<rect x="965" y="351" width="60" height="21" fill="#adadad" />
<rect x="966" y="352" width="58" height="19" fill="#e1e1e1" />
<text x="974.5" y="338" font-size="11" fill="#000" text-anchor="start" >Reverse</text>
<text x="982" y="366" font-size="11" fill="#000" text-anchor="start" >Save</text>
<rect x="574" y="388" width="438" height="1" fill="#dcdcdc" />
<rect x="706" y="388" width="1" height="73" fill="#dcdcdc" />
<rect x="835" y="388" width="1" height="73" fill="#dcdcdc" />
<rect x="965" y="388" width="1" height="73" fill="#dcdcdc" />
<rect x="581" y="385" width="48" height="6" fill="#f0f0f0" />
<text x="583" y="392.7" font-size="10.5" fill="#000" text-anchor="start" >Timebase</text>
<rect x="712.5" y="385" width="53" height="6" fill="#f0f0f0" />
<text x="714.5" y="392.7" font-size="10.5" fill="#000" text-anchor="start" >Channel A</text>
<rect x="841.5" y="385" width="53" height="6" fill="#f0f0f0" />
<text x="843.5" y="392.7" font-size="10.5" fill="#000" text-anchor="start" >Channel B</text>
<rect x="971.5" y="385" width="39" height="6" fill="#f0f0f0" />
<text x="973.5" y="392.7" font-size="10.5" fill="#000" text-anchor="start" >Trigger</text>
<text x="576.5" y="410.7" font-size="10.5" fill="#000" text-anchor="start" >Scale:</text>
<rect x="613" y="395" width="87" height="20" fill="#a0a0a0" />
<rect x="614" y="396" width="85" height="18" fill="#ffffff" />
<text x="618" y="408.5" font-size="11" fill="#000" text-anchor="start" xml:space="preserve">1 ms/Div</text>
<text x="576.5" y="430.8" font-size="10.5" fill="#000" text-anchor="start" >X pos.(Div):</text>
<rect x="638" y="417" width="62" height="19" fill="#a0a0a0" />
<rect x="639" y="418" width="60" height="17" fill="#ffffff" />
<text x="642" y="430.5" font-size="11" fill="#000" text-anchor="start" xml:space="preserve">0</text>
<text x="708.5" y="410.7" font-size="10.5" fill="#000" text-anchor="start" >Scale:</text>
<rect x="745" y="395" width="87" height="20" fill="#a0a0a0" />
<rect x="746" y="396" width="85" height="18" fill="#ffffff" />
<text x="749" y="408.5" font-size="11" fill="#000" text-anchor="start" xml:space="preserve">5&#160; V/Div</text>
<text x="708.5" y="430.8" font-size="10.5" fill="#000" text-anchor="start" >Y pos.(Div):</text>
<rect x="770" y="417" width="62" height="19" fill="#a0a0a0" />
<rect x="771" y="418" width="60" height="17" fill="#ffffff" />
<text x="774" y="430.5" font-size="11" fill="#000" text-anchor="start" xml:space="preserve">0</text>
<text x="837.5" y="410.7" font-size="10.5" fill="#000" text-anchor="start" >Scale:</text>
<rect x="875" y="395" width="87" height="20" fill="#a0a0a0" />
<rect x="876" y="396" width="85" height="18" fill="#ffffff" />
<text x="879" y="408.5" font-size="11" fill="#000" text-anchor="start" xml:space="preserve">5&#160; V/Div</text>
<text x="837.5" y="430.8" font-size="10.5" fill="#000" text-anchor="start" >Y pos.(Div):</text>
<rect x="901" y="417" width="61" height="19" fill="#a0a0a0" />
<rect x="902" y="418" width="59" height="17" fill="#ffffff" />
<text x="905" y="430.5" font-size="11" fill="#000" text-anchor="start" xml:space="preserve">0</text>
<text x="969.5" y="410.7" font-size="10.5" fill="#000" text-anchor="start" >Edge:</text>
<text x="969.5" y="430.8" font-size="10.5" fill="#000" text-anchor="start" >Level:</text>
<rect x="582" y="440" width="24" height="18" fill="#3c8fe0" />
<rect x="583" y="441" width="22" height="16" fill="#cce4f7" />
<text x="594.0" y="453.5" font-size="11" fill="#000" text-anchor="middle" >Y/T</text>
<rect x="608" y="440" width="26" height="18" fill="#adadad" />
<rect x="609" y="441" width="24" height="16" fill="#e1e1e1" />
<text x="621.0" y="453.5" font-size="11" fill="#000" text-anchor="middle" >Add</text>
<rect x="638" y="440" width="26" height="18" fill="#adadad" />
<rect x="639" y="441" width="24" height="16" fill="#e1e1e1" />
<text x="651.0" y="453.5" font-size="11" fill="#000" text-anchor="middle" >B/A</text>
<rect x="666" y="440" width="28" height="18" fill="#adadad" />
<rect x="667" y="441" width="26" height="16" fill="#e1e1e1" />
<text x="680.0" y="453.5" font-size="11" fill="#000" text-anchor="middle" >A/B</text>
<rect x="710" y="440" width="23" height="18" fill="#adadad" />
<rect x="711" y="441" width="21" height="16" fill="#e1e1e1" />
<text x="721.5" y="453.5" font-size="11" fill="#000" text-anchor="middle" >AC</text>
<rect x="735" y="440" width="25" height="18" fill="#adadad" />
<rect x="736" y="441" width="23" height="16" fill="#e1e1e1" />
<text x="747.5" y="453.5" font-size="11" fill="#000" text-anchor="middle" >0</text>
<rect x="762" y="440" width="25" height="18" fill="#3c8fe0" />
<rect x="763" y="441" width="23" height="16" fill="#cce4f7" />
<text x="774.5" y="453.5" font-size="11" fill="#000" text-anchor="middle" >DC</text>
<rect x="840" y="442" width="24" height="17" fill="#adadad" />
<rect x="841" y="443" width="22" height="15" fill="#e1e1e1" />
<text x="852.0" y="454.5" font-size="11" fill="#000" text-anchor="middle" >AC</text>
<rect x="866" y="442" width="22" height="17" fill="#adadad" />
<rect x="867" y="443" width="20" height="15" fill="#e1e1e1" />
<text x="877.0" y="454.5" font-size="11" fill="#000" text-anchor="middle" >0</text>
<rect x="890" y="442" width="25" height="17" fill="#3c8fe0" />
<rect x="891" y="443" width="23" height="15" fill="#cce4f7" />
<text x="902.5" y="454.5" font-size="11" fill="#000" text-anchor="middle" >DC</text>
<rect x="917" y="442" width="17" height="17" fill="#adadad" />
<rect x="918" y="443" width="15" height="15" fill="#e1e1e1" />
<text x="925.5" y="454.5" font-size="11" fill="#000" text-anchor="middle" >-</text>
<rect x="971" y="440" width="37" height="18" fill="#adadad" />
<rect x="972" y="441" width="35" height="16" fill="#e1e1e1" />
<text x="989.5" y="453.5" font-size="11" fill="#000" text-anchor="middle" >Single</text>
<rect x="1010" y="440" width="30" height="18" fill="#adadad" />
<rect x="1011" y="441" width="28" height="16" fill="#e1e1e1" />
<text x="1025.0" y="453.5" font-size="11" fill="#000" text-anchor="middle" ></text>
<circle cx="820.5" cy="447.5" r="6" fill="#f7f7f7" stroke="#cfcfcf" stroke-width="1"/>
<circle cx="820.5" cy="447.5" r="3.5" fill="#6a6a6a"/>
<circle cx="955.5" cy="449.5" r="6" fill="#f7f7f7" stroke="#cfcfcf" stroke-width="1"/>
<circle cx="955.5" cy="449.5" r="3.5" fill="#6a6a6a"/>
<rect x="566" y="470" width="125" height="3" fill="#ffffff" />
<rect x="691" y="470" width="1" height="3" fill="#8a8a8a" />
<rect x="705" y="470" width="12" height="3" fill="url(#sg)" />
<rect x="717" y="470" width="246" height="3" fill="#ababab" />
<rect x="963" y="470" width="17" height="3" fill="#f2f2f2" />
<rect x="980" y="470" width="1" height="4" fill="#ffffff" />
<rect x="963" y="473" width="18" height="1" fill="#ffffff" />
<rect x="985" y="470" width="1" height="10" fill="#6e6e6e" />
<rect x="986" y="470" width="25" height="10" fill="#f0f0f0" />
<rect x="987" y="472" width="21" height="1" fill="#c8c8c8" />
<rect x="1011" y="470" width="1" height="10" fill="#8a8a8a" />
<rect x="952" y="486" width="1" height="12" fill="#c0c0c0" />
<rect x="967" y="486" width="1" height="12" fill="#c0c0c0" />
<rect x="983" y="486" width="1" height="12" fill="#c0c0c0" />
<path d="M943.5 494L947 490.5V497.5Z" fill="#10208a"/>
<path d="M963 494L959.5 490.5V497.5Z" fill="#10208a"/>
<rect x="970.5" y="489.5" width="5" height="4" fill="none" stroke="#1030c0" stroke-width="1"/><rect x="973.5" y="492.5" width="6" height="5" fill="#fff" stroke="#1030c0" stroke-width="1"/>
<path d="M1000.5 493.5L1003 496L1005.5 493.5" fill="none" stroke="#000" stroke-width="1"/>
<text x="927.6" y="491.6" font-size="17" font-weight="bold" fill="#1e0b2e" stroke="#1e0b2e" stroke-width="0.3" textLength="81.7" lengthAdjust="spacingAndGlyphs">bbs.eetop.cn</text>
<rect x="873.5" y="26.5" width="92" height="41" rx="20.5" fill="#343434" fill-opacity="0.92" stroke="#262626" stroke-opacity="0.8"/>
<rect x="878" y="47" width="56" height="1" fill="#4a4a4a" />
<circle cx="960.6" cy="46.8" r="28.8" fill="#3a3a3a" fill-opacity="0.96" stroke="#262626" stroke-width="1"/>
<defs><linearGradient id="ag" x1="0" y1="0" x2="0" y2="1"><stop offset="0" stop-color="#18e818"/><stop offset="0.55" stop-color="#9ae010"/><stop offset="1" stop-color="#e8c800"/></linearGradient></defs>
<path d="M961.49 21.32A25.5 25.5 0 0 1 981.23 61.79" fill="none" stroke="url(#ag)" stroke-width="2.4"/>
<path d="M943.6 40.2C944.6 37.4 946.6 36.4 948.8 36.4C951.8 36.4 953.6 38.4 953.6 41C953.6 43.8 951.4 45.8 948 45.8H947.2M948 45.8C952 45.8 954.3 48.2 954.3 51.2C954.3 54.4 951.8 56.4 948.6 56.4C946 56.4 943.8 55.2 943 53" fill="none" stroke="#e6e6e6" stroke-width="1.3"/>
<path d="M967.8 36.9H958.6L957.9 45.8C959 44.9 960.6 44.4 962.2 44.4C965.8 44.4 968.2 47 968.2 50.4C968.2 53.9 965.6 56.4 962.2 56.4C959.8 56.4 957.8 55.3 956.9 53.4" fill="none" stroke="#e6e6e6" stroke-width="1.3"/>
<text x="970.5" y="56.7" font-size="11.5" fill="#e6e6e6">%</text>
<text x="905.5" y="41" font-size="11" fill="#f4f4f4">0</text><text x="912.2" y="41" font-size="10.5" fill="#c4c4c4">K/s</text>
<text x="905.5" y="61.8" font-size="11" fill="#f4f4f4">0</text><text x="912.2" y="61.8" font-size="10.5" fill="#c4c4c4">K/s</text>
<path d="M887 34L890.6 37.6H888.1V40.5H885.9V37.6H883.4Z" fill="#f09a28"/>
<path d="M887 61L890.6 57.4H888.1V54H885.9V57.4H883.4Z" fill="#28b828"/>
</svg>
</body></html>
